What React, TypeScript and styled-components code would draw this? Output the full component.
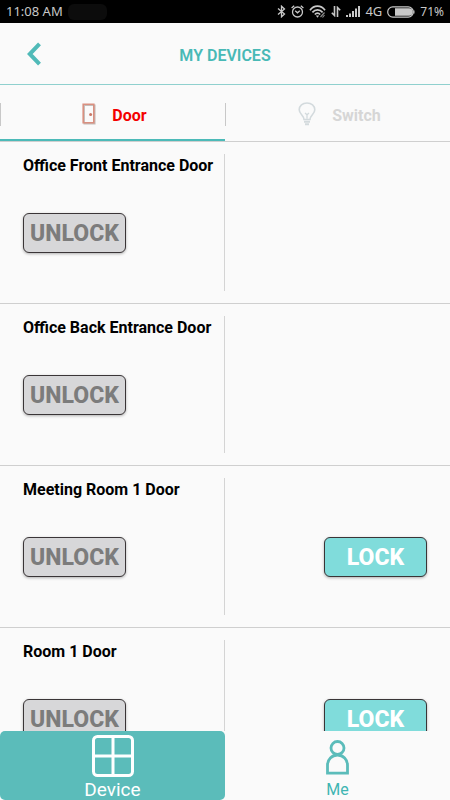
import React from "react";
import styled, { createGlobalStyle } from "styled-components";

const TEAL = "#5bbcba";
const LINE = "#cfcfcf";

const GlobalStyle = createGlobalStyle`
  * { box-sizing: border-box; }
  body {
    margin: 0;
    background: #fafafa;
    font-family: Roboto, "Liberation Sans", sans-serif;
  }
  button { font-family: inherit; margin: 0; padding: 0; cursor: pointer; }
`;

const Screen = styled.div`
  display: flex;
  flex-direction: column;
  height: 100vh;
  background: #fafafa;
`;

const StatusBar = styled.div`
  display: flex;
  flex: none;
  align-items: center;
  height: 23px;
  padding: 0 6px;
  background: #000;
  color: #c8c8c8;
  font-family: "Noto Sans", sans-serif;
  font-size: 13px;
  line-height: 23px;
`;

const Redacted = styled.div`
  width: 39px;
  height: 16px;
  margin-left: 5px;
  border-radius: 6px;
  background: #0c0c0c;
`;

const StatusIcons = styled.div`
  display: flex;
  align-items: center;
  margin-left: auto;
  gap: 5px;

  svg { display: block; }
`;

const BatteryLevel = styled.span`
  font-size: 12px;
`;

const Header = styled.header`
  display: grid;
  flex: none;
  grid-template-columns: 68px 1fr 68px;
  align-items: center;
  height: 62px;
  border-bottom: 1px solid #8fd0ce;
`;

const BackButton = styled.button`
  display: flex;
  align-items: center;
  justify-content: center;
  height: 40px;
  border: 0;
  background: none;
`;

const Title = styled.h1`
  margin: 0;
  padding-top: 4px;
  color: #48b9b6;
  font-size: 16px;
  font-weight: 600;
  line-height: 20px;
  text-align: center;
`;

const Tabs = styled.div`
  display: grid;
  flex: none;
  grid-template-columns: 1fr 1fr;
  height: 57px;
  border-bottom: 1px solid ${LINE};
`;

const Tab = styled.button<{ $active?: boolean }>`
  display: flex;
  align-items: center;
  justify-content: center;
  gap: 16px;
  padding: 4px 0 0 4px;
  border: 0;
  border-bottom: 2px solid ${(p) => (p.$active ? "#4cbab8" : "transparent")};
  background: linear-gradient(#c8c8c8, #c8c8c8) 0 18px / 1px 23px no-repeat;
  color: ${(p) => (p.$active ? "#f40000" : "#d6d6d6")};
  font-size: 16px;
  font-weight: 700;
  line-height: 20px;
`;

const TabLabel = styled.span`
  padding-top: 4px;
`;

const DeviceList = styled.main`
  flex: 1;
  min-height: 0;
  overflow-y: auto;
  scrollbar-width: none;
`;

const DeviceRow = styled.section`
  display: grid;
  grid-template-columns: 1fr 1fr;
  height: 162px;
  padding: 12px 0;
  border-bottom: 1px solid ${LINE};
`;

const DeviceCell = styled.div`
  padding-left: 23px;
  border-right: 1px solid #d4d4d4;
`;

const ActionCell = styled.div`
  display: flex;
  justify-content: flex-end;
  padding: 59px 23px 0 0;
`;

const DeviceName = styled.h2`
  margin: 0 0 37px;
  padding-top: 2px;
  color: #000;
  font-size: 16px;
  font-weight: 700;
  line-height: 20px;
  white-space: nowrap;
`;

const LockButton = styled.button<{ $primary?: boolean }>`
  display: block;
  width: 103px;
  height: 40px;
  padding-top: 2px;
  border: 1px solid #3a3537;
  border-radius: 6px;
  background: ${(p) => (p.$primary ? "#80dcdb" : "#d7d7d9")};
  box-shadow: 0 1px 3px rgba(0, 0, 0, 0.3);
  color: ${(p) => (p.$primary ? "#fff" : "#7c7c7c")};
  font-size: 23px;
  font-weight: 800;
  line-height: 24px;
`;

const BottomNav = styled.nav`
  display: grid;
  flex: none;
  grid-template-columns: 1fr 1fr;
  height: 69px;
`;

const NavButton = styled.button<{ $active?: boolean }>`
  display: flex;
  flex-direction: column;
  align-items: center;
  justify-content: flex-end;
  border: 0;
  border-radius: 5px;
  background: ${(p) => (p.$active ? TEAL : "transparent")};
  color: ${(p) => (p.$active ? "#fff" : "#3fb5b2")};
  font-size: ${(p) => (p.$active ? "19px" : "16px")};
  line-height: 20px;
  gap: ${(p) => (p.$active ? "3px" : "5px")};
`;

const BluetoothIcon = () => (
  <svg width="9" height="13" viewBox="0 0 9 13" fill="none" stroke="currentColor" strokeWidth="1.3">
    <path d="M1 3.5 7.5 9 4.5 11.8V1.2L7.5 4 1 9.5" />
  </svg>
);

const AlarmIcon = () => (
  <svg width="13" height="13" viewBox="0 0 13 13" fill="none" stroke="currentColor" strokeWidth="1.3">
    <circle cx="6.5" cy="7" r="5" />
    <path d="M.6 3 3.2.8M12.4 3 9.8.8M4.2 5.8l2.3 2 2.3-2" />
  </svg>
);

const WifiIcon = () => (
  <svg width="17" height="13" viewBox="0 0 17 13" fill="none" stroke="currentColor" strokeWidth="1.7">
    <path d="M1 5.2C5-.2 12-.2 16 5.2M3.4 7.4c2.800-3.500 7.400-3.500 10.200 0M5.800 9.500c1.600-1.800 3.800-1.800 5.400 0" />
    <path d="M8.5 12.8 6.8 10.6h3.4z" fill="currentColor" stroke="none" />
    <path d="m11.5 12 4-4.5M13.5 12.5l2-2.5" strokeWidth="1.2" stroke="#8a8a8a" />
  </svg>
);

const DataIcon = () => (
  <svg width="10" height="11" viewBox="0 0 10 11" fill="none" stroke="currentColor" strokeWidth="1.6">
    <path d="M3.5 0v9.500L.8 6.800M6.500 11V1.500l2.700 2.700" />
  </svg>
);

const SignalIcon = () => (
  <svg width="14" height="11" viewBox="0 0 14 11" fill="currentColor">
    <path d="M0 9h2v2H0zM3 7.5h2V11H3zM6 5h2v6H6zM9 2.5h2V11H9zM12 0h2v11h-2z" />
  </svg>
);

const BatteryIcon = () => (
  <svg width="28" height="12" viewBox="0 0 28 12">
    <rect x=".7" y=".9" width="25.6" height="10.2" rx="5.1" fill="none" stroke="currentColor" strokeWidth="1.2" />
    <path d="M8 2.2h14a3.800 3.800 0 0 1 0 7.600H8z" fill="currentColor" />
    <path d="M26.5 4.5h1v3h-1z" fill="currentColor" />
  </svg>
);

const BackIcon = () => (
  <svg width="14" height="24" viewBox="0 0 14 24" fill="none" stroke="#50bab8" strokeWidth="4">
    <path d="M12.5 1.8 2.8 12l9.700 10.200" />
  </svg>
);

const DoorIcon = () => (
  <svg width="14" height="22" viewBox="0 0 14 22">
    <path d="M2.2 2.2h10.600v18.600H2.200z" fill="none" stroke="#c4bdba" strokeWidth="1.5" />
    <path d="M1.2 1.2h10.600v18.600H1.200z" fill="none" stroke="#d99080" strokeWidth="1.6" />
    <circle cx="8.6" cy="11.5" r="1.5" fill="#c97867" />
  </svg>
);

const BulbIcon = () => (
  <svg width="18" height="24" viewBox="0 0 18 24" fill="none" stroke="#d3dadd" strokeWidth="1.6">
    <path d="M6 17.5c0-4-4.800-5.500-4.800-9.700C1.200 3.700 4.600 1 9 1s7.800 2.700 7.800 6.800c0 4.200-4.800 5.700-4.800 9.700z" />
    <path d="M7 11l2 1.800 2-1.800M9 12.800v4" strokeWidth="1.3" />
    <path d="M6 19.700h6M7 22.300h4" strokeWidth="2" />
  </svg>
);

const GridIcon = () => (
  <svg width="42" height="42" viewBox="0 0 42 42" fill="none" stroke="#fff" strokeWidth="3">
    <rect x="1.5" y="1.5" width="39" height="39" rx="4" />
    <path d="M21 2v38M2 21h38" />
  </svg>
);

const PersonIcon = () => (
  <svg width="23" height="35" viewBox="0 0 23 35" fill="none" stroke={TEAL} strokeWidth="2.8">
    <circle cx="11.5" cy="8" r="6.5" />
    <path d="M1.5 33.200V25c0-5.500 4.300-10 10-10s10 4.500 10 10v8.200z" />
  </svg>
);

const devices = [
  { name: "Office Front Entrance Door", lockable: false },
  { name: "Office Back Entrance Door", lockable: false },
  { name: "Meeting Room 1 Door", lockable: true },
  { name: "Room 1 Door", lockable: true },
];

export default function App() {
  return (
    <Screen>
      <GlobalStyle />
      <StatusBar>
        <span>11:08 AM</span>
        <Redacted />
        <StatusIcons>
          <BluetoothIcon />
          <AlarmIcon />
          <WifiIcon />
          <DataIcon />
          <SignalIcon />
          <span>4G</span>
          <BatteryIcon />
          <BatteryLevel>71%</BatteryLevel>
        </StatusIcons>
      </StatusBar>
      <Header>
        <BackButton aria-label="Back">
          <BackIcon />
        </BackButton>
        <Title>MY DEVICES</Title>
      </Header>
      <Tabs role="tablist">
        <Tab role="tab" aria-selected="true" $active>
          <DoorIcon />
          <TabLabel>Door</TabLabel>
        </Tab>
        <Tab role="tab" aria-selected="false">
          <BulbIcon />
          <TabLabel>Switch</TabLabel>
        </Tab>
      </Tabs>
      <DeviceList>
        {devices.map((device) => (
          <DeviceRow key={device.name}>
            <DeviceCell>
              <DeviceName>{device.name}</DeviceName>
              <LockButton>UNLOCK</LockButton>
            </DeviceCell>
            <ActionCell>{device.lockable && <LockButton $primary>LOCK</LockButton>}</ActionCell>
          </DeviceRow>
        ))}
      </DeviceList>
      <BottomNav>
        <NavButton $active aria-current="page">
          <GridIcon />
          Device
        </NavButton>
        <NavButton>
          <PersonIcon />
          Me
        </NavButton>
      </BottomNav>
    </Screen>
  );
}
